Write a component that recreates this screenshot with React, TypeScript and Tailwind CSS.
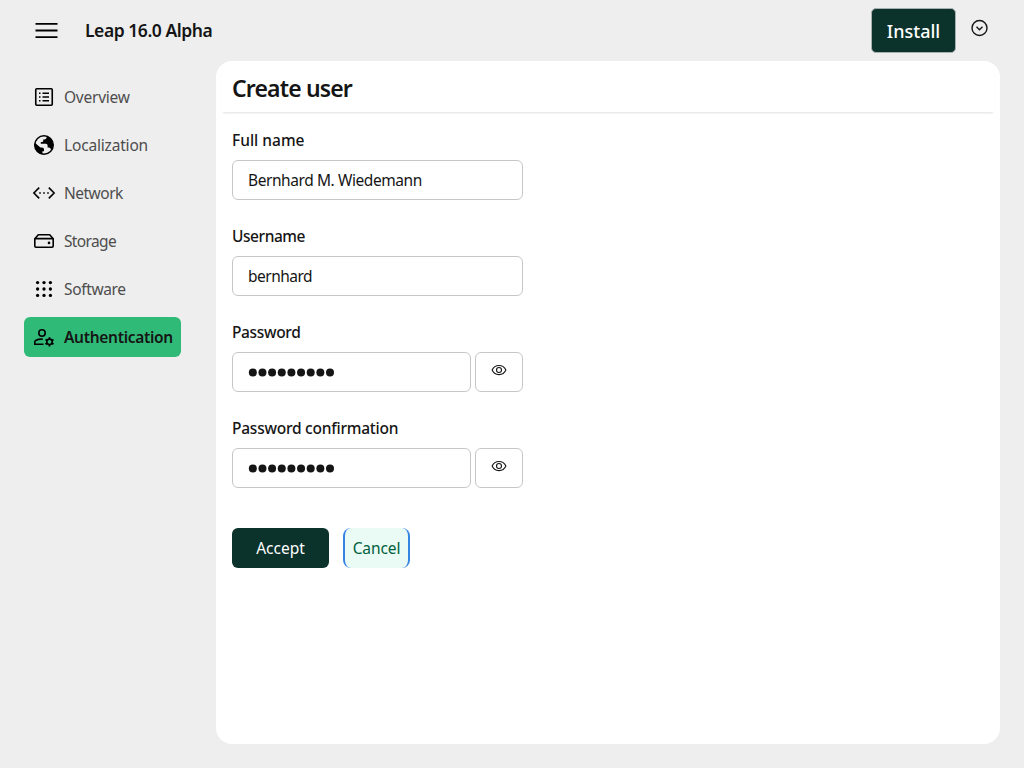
import type { ReactNode } from "react";

const Svg = ({ children, className = "" }: { children: ReactNode; className?: string }) => (
  <svg viewBox="0 0 24 24" fill="none" stroke="black" className={"size-6 shrink-0 " + className}>{children}</svg>
);

const List = () => (
  <Svg>
    <rect x="3.75" y="3.75" width="16.5" height="16.5" rx="1" strokeWidth="1.6" />
    <path strokeWidth="1.6" d="M7 8.2H8.5 M7 12H8.5 M7 15.8H8.5 M10.5 8.2H17 M10.5 12H17 M10.5 15.8H17" />
  </Svg>
);
const Globe = () => (
  <Svg>
    <circle cx="12" cy="12" r="9.25" strokeWidth="1.5" />
    <path stroke="none" fill="black" d="M2.6 9.6 L8.4 14.5 H10 Q12 14.6 12 16.4 V18.2 H10.4 V21.4 C5 20.8 2 16.5 2.6 9.6Z" />
    <path stroke="none" fill="black" d="M14.6 3 V4.6 Q14.5 6.3 12.7 6.4 H11.2 V8 Q11.1 9 10.1 9 H8.8 V10.8 H14 Q15.6 11 15.6 12.4 V14.5 H17 Q18.6 14.6 19.3 17 C22.4 12.6 21.6 6 14.6 3Z" />
  </Svg>
);
const Ethernet = () => (
  <Svg>
    <path strokeWidth="1.6" d="M7.2 6.6 L1.9 12 L7.2 17.4 M16.8 6.6 L22.1 12 L16.8 17.4" />
    <path stroke="none" fill="black" d="M7.2 11.2H8.8V12.8H7.2zM11.2 11.2H12.8V12.8H11.2zM15.2 11.2H16.8V12.8H15.2z" />
  </Svg>
);
const Drive = () => (
  <Svg>
    <path strokeWidth="1.6" strokeLinejoin="round" d="M2.8 9.8 L6.3 5.8 H17.7 L21.2 9.8 M2.8 9.6 H21.2 V17 Q21.2 18.2 20 18.2 H4 Q2.8 18.2 2.8 17Z" />
    <circle cx="17" cy="13.9" r="1.3" fill="black" stroke="none" />
  </Svg>
);
const Dots = () => (
  <Svg>
    {[5.6, 12, 18.4].map((y) => [5.6, 12, 18.4].map((x) => (
      <circle key={`${x}-${y}`} cx={x} cy={y} r="1.65" fill="black" stroke="none" />
    )))}
  </Svg>
);
const UserGear = () => (
  <Svg>
    <g strokeWidth="1.6">
      <circle cx="10" cy="8" r="3.2" />
      <path d="M10.8 14.2 C7.5 13.9 5.3 14.6 3.7 15.5 Q2.8 16 2.8 17 V19.2 H11.5" />
      <circle cx="17.5" cy="16.8" r="2.7" />
      <path strokeWidth="1.8" d="M17.5 14.1 V12.2 M17.5 19.5 V21.4 M19.8 15.5 L21.5 14.5 M15.2 18.1 L13.5 19.1 M19.8 18.1 L21.5 19.1 M15.2 15.5 L13.5 14.5" />
    </g>
  </Svg>
);

const NavItem = ({ icon, label, textClass }: { icon: ReactNode; label: string; textClass: string }) => (
  <li className="flex h-10 items-center gap-2 pl-2 text-[#4d4d4d]">
    {icon}
    <span className={"whitespace-nowrap " + textClass}>{label}</span>
  </li>
);

const Field = ({ label, labelClass, children }: { label: string; labelClass: string; children: ReactNode }) => (
  <div className="mb-6 h-[72px] w-[291px]">
    <label className={"block h-8 leading-[25px] font-medium whitespace-nowrap " + labelClass}>{label}</label>
    <div className="flex h-10 gap-1">{children}</div>
  </div>
);

const box = "h-10 rounded-md border border-[#c7c7c7] bg-white";

const Password = () => (
  <>
    <div className={box + " flex w-[239px] items-center pl-[15px]"}>
      <svg viewBox="0 0 88 12" className="h-3 w-[88px]" fill="#151515">
        {Array.from({ length: 9 }, (_, i) => <circle key={i} cx={4.8 + i * 9.65} cy="6.5" r="4" />)}
      </svg>
    </div>
    <button className={box + " flex w-12 justify-center pt-[9px]"} aria-label="Show password">
      <svg viewBox="0 0 16 16" className="size-4" fill="none" stroke="#151515" strokeWidth="1.1">
        <path d="M1.1 8 C3.8 1.9 12.2 1.9 14.9 8 C12.2 14.1 3.8 14.1 1.1 8Z" />
        <circle cx="8" cy="8" r="2.5" />
      </svg>
    </button>
  </>
);

export default function App() {
  return (
    <div className="flex h-screen w-full flex-col overflow-hidden bg-[#eeeeee] font-['Noto_Sans',sans-serif] text-[15.5px] leading-6 text-[#151515]">
      <header className="flex h-[61px] shrink-0 items-center pb-px pl-[35px]">
        <svg viewBox="0 0 23 15" className="mt-px h-[15px] w-[23px] shrink-0" fill="black">
          <path d="M.5 0H22.5V1.8H.5zM.5 6.6H22.5V8.4H.5zM.5 13.2H22.5V15H.5z" />
        </svg>
        <h1 className="ml-[27px] text-[17.5px] font-semibold tracking-[-0.45px] whitespace-nowrap">Leap 16.0 Alpha</h1>
        <button className="mt-px ml-auto h-[45px] w-[85px] rounded-[5px] border border-[#a8b1af] bg-[#0c322c] text-lg font-medium text-white">Install</button>
        <svg viewBox="0 0 18 18" className="mr-9 mb-[5px] ml-[14px] size-[18px]" fill="none" stroke="#151515" strokeWidth="1.4">
          <circle cx="9.5" cy="9" r="7.5" />
          <path d="M6.5 7.8 L9.5 10.8 L12.5 7.8" />
        </svg>
      </header>
      <div className="flex min-h-0 flex-1">
        <nav className="w-[216px] shrink-0 pt-4 pl-6">
          <ul className="flex w-[157px] flex-col gap-2">
            <NavItem icon={<List />} label="Overview" textClass="tracking-[-0.24px]" />
            <NavItem icon={<Globe />} label="Localization" textClass="tracking-[-0.18px]" />
            <NavItem icon={<Ethernet />} label="Network" textClass="tracking-[-0.5px]" />
            <NavItem icon={<Drive />} label="Storage" textClass="tracking-[-0.65px]" />
            <NavItem icon={<Dots />} label="Software" textClass="tracking-[-0.35px]" />
            <li className="flex h-10 items-center gap-2 rounded-md bg-[#30ba78] pl-2">
              <UserGear /><span className="font-semibold tracking-[-0.3px] whitespace-nowrap">Authentication</span>
            </li>
          </ul>
        </nav>
        <main className="mr-6 mb-6 flex-1 rounded-2xl bg-white">
          <div className="mx-1.5 h-[51px] pt-[11px] pl-2.5 shadow-[0_2px_2px_-1px_rgba(0,0,0,0.12)]">
            <h2 className="text-[23px] leading-8 font-semibold tracking-[-0.85px]">Create user</h2>
          </div>
          <form className="px-4 pt-4">
            <Field label="Full name" labelClass="">
              <div className={box + " flex w-[291px] items-center pl-[15px] tracking-[-0.42px]"}>Bernhard M. Wiedemann</div>
            </Field>
            <Field label="Username" labelClass="tracking-[-0.45px]">
              <div className={box + " flex w-[291px] items-center pl-[15px] tracking-[-0.5px]"}>bernhard</div>
            </Field>
            <Field label="Password" labelClass="tracking-[-0.35px]"><Password /></Field>
            <Field label="Password confirmation" labelClass="tracking-[-0.24px]"><Password /></Field>
            <div className="mt-10 flex gap-3.5">
              <button className="h-10 w-[97px] rounded-md bg-[#0c322c] text-white">Accept</button>
              <button className="h-10 w-[67px] rounded-lg border-x-2 border-[#3584e4] bg-[#eafaf4] tracking-[-0.1px] text-[#00613c]">Cancel</button>
            </div>
          </form>
        </main>
      </div>
    </div>
  );
}
